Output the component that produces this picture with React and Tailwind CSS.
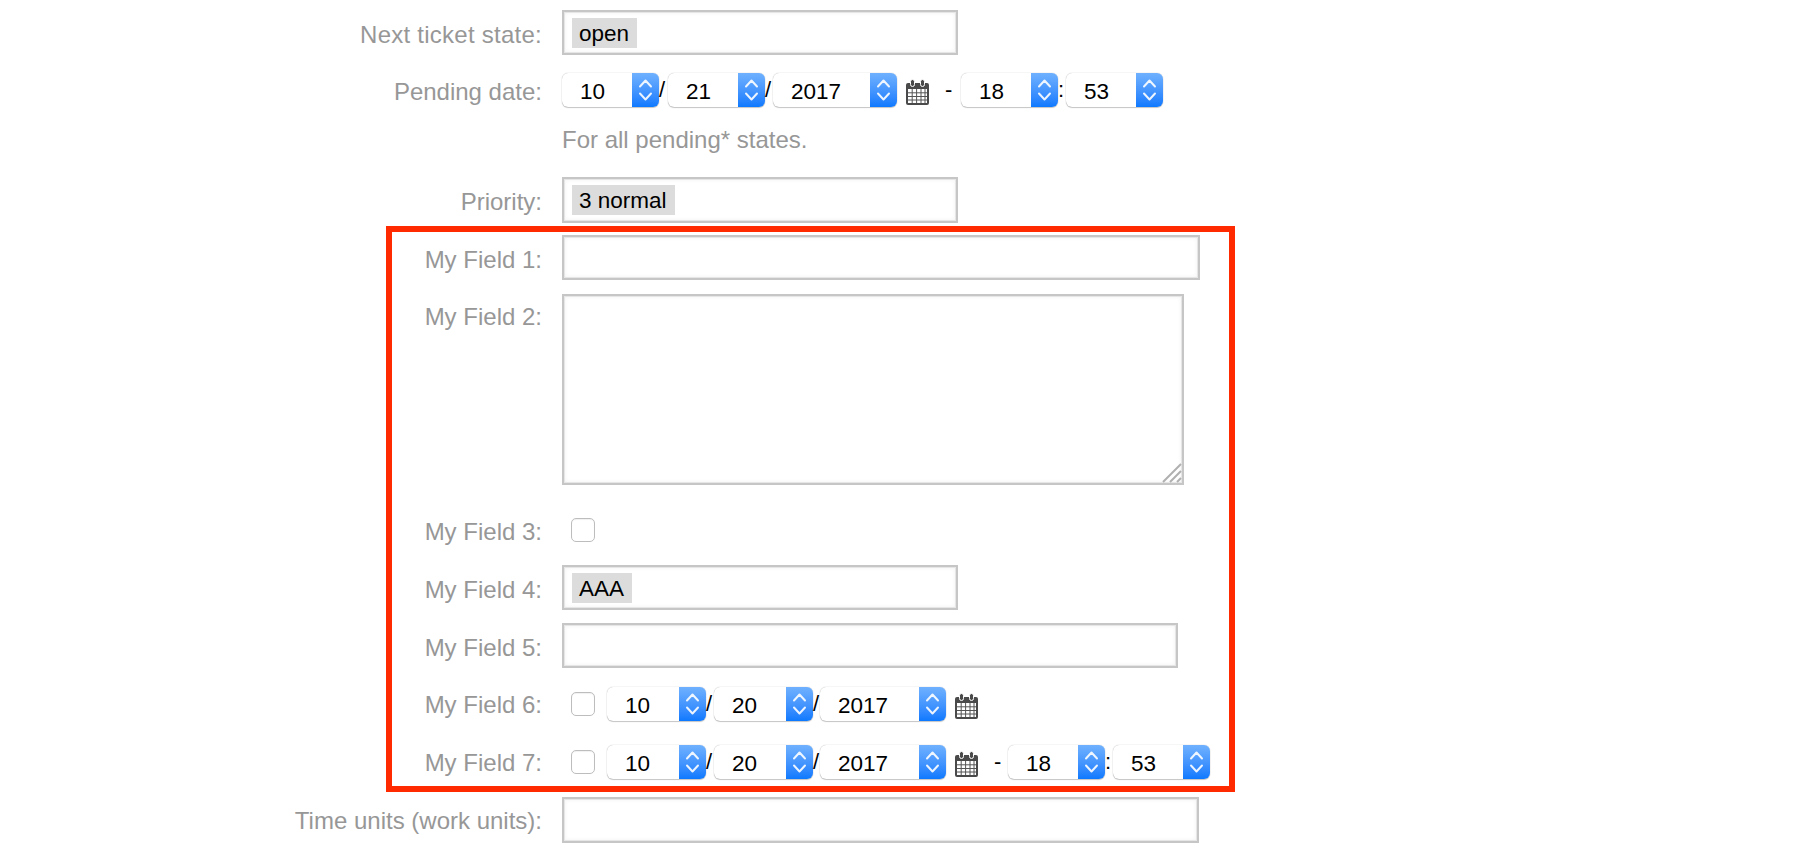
const fieldBox = "border-2 border-[#c6c6c6] bg-white shadow-[inset_0_0_0_1px_#e6e6e6,inset_0_0_5px_rgba(0,0,0,0.08)]";

const Label = ({ children, className }) => (
  <div className={`shrink-0 text-right text-[24px] leading-[28px] text-[#979797] ${className}`}>{children}</div>
);

const TextBox = ({ className }) => <div className={`${fieldBox} ${className}`} />;

const TokenBox = ({ value, className }) => (
  <div className={`${fieldBox} flex items-center pl-[8px] ${className}`}>
    <span className="h-[30px] bg-[#dcdcdc] pl-[7px] pr-[8px] text-[22.5px] leading-[32px] text-black">{value}</span>
  </div>
);

const Spinner = () => (
  <div className="flex h-full w-[27px] shrink-0 items-center justify-center rounded-r-[6px] bg-gradient-to-b from-[#6fb1ff] to-[#0a79ff]">
    <svg width="15" height="24" viewBox="0 0 15 24" fill="none" stroke="#ffffff" strokeOpacity="0.9" strokeWidth="2" strokeLinecap="round" strokeLinejoin="round">
      <path d="M2 8.5 7.5 2.5 13 8.5" />
      <path d="M2 15.5 7.5 21.5 13 15.5" />
    </svg>
  </div>
);

const Select = ({ value, className }) => (
  <div className={`flex h-[34px] shrink-0 items-stretch rounded-[6px] bg-white shadow-[0_0_1px_rgba(0,0,0,0.35),0_1px_1px_rgba(0,0,0,0.2)] ${className}`}>
    <span className="flex-1 pl-[18px] text-[22.5px] leading-[37px] text-black">{value}</span>
    <Spinner />
  </div>
);

const Sep = ({ children, className }) => (
  <span className={`shrink-0 text-[22px] leading-[34px] text-black ${className}`}>{children}</span>
);

const Calendar = () => (
  <svg className="ml-[9px] mt-[6px] shrink-0" width="23" height="26" viewBox="0 0 23 26">
    <path d="M2 4h19a2 2 0 0 1 2 2v18a2 2 0 0 1-2 2H2a2 2 0 0 1-2-2V6a2 2 0 0 1 2-2Z" fill="#4a4a4a" />
    <rect x="4.5" y="0.5" width="4" height="7" rx="2" fill="#4a4a4a" stroke="#ffffff" strokeWidth="1" />
    <rect x="14.5" y="0.5" width="4" height="7" rx="2" fill="#4a4a4a" stroke="#ffffff" strokeWidth="1" />
    <path d="M2 10h19v14H2Z" fill="#ffffff" />
    <path d="M6.2 10v14M10.6 10v14M15 10v14M19 10v14M2 13.8h19M2 17.5h19M2 21h19" stroke="#555555" strokeWidth="1" />
  </svg>
);

const DateParts = ({ day, small }) => {
  const mid = small ? "w-[97px]" : "w-[99px]";
  const year = small ? "w-[124px]" : "w-[126px]";
  return (
    <>
      <Select value="10" className={mid} />
      <Sep className={small ? "w-[9px]" : "w-[8px]"}>/</Sep>
      <Select value={day} className={mid} />
      <Sep className={small ? "w-[8px]" : "w-[7px]"}>/</Sep>
      <Select value="2017" className={year} />
      <Calendar />
    </>
  );
};

const TimeParts = ({ left }) => (
  <>
    <Sep className={left}>-</Sep>
    <Select value="18" className="w-[97px]" />
    <Sep className="w-[8px]">:</Sep>
    <Select value="53" className="w-[97px]" />
  </>
);

const CheckBox = () => (
  <div className="ml-[9px] mr-[12px] mt-[5px] h-[24px] w-[24px] shrink-0 rounded-[5px] border border-[#bdbdbd] bg-white shadow-[inset_0_1px_1px_rgba(0,0,0,0.06)]" />
);

// rows outside the red frame: label column ends at 542
const OuterRow = ({ label, labelClass = "pt-[11px]", className, children }) => (
  <div className={`flex items-start ${className}`}>
    <Label className={`w-[542px] ${labelClass}`}>{label}</Label>
    <div className="ml-[20px] flex items-start">{children}</div>
  </div>
);

// rows inside the frame: frame's inner edge is at 392
const FrameRow = ({ label, labelClass = "pt-[11px]", className, children }) => (
  <div className={`flex items-start ${className}`}>
    <Label className={`w-[150px] ${labelClass}`}>{label}</Label>
    <div className="ml-[20px] flex items-start">{children}</div>
  </div>
);

export default function App() {
  return (
    <div className="h-[855px] w-[1806px] overflow-hidden bg-white pt-[10px] font-['Liberation_Sans',Arial,sans-serif]">
      <OuterRow label="Next ticket state:" labelClass="pt-[11px] tracking-[0.25px]">
        <TokenBox value="open" className="h-[45px] w-[396px]" />
      </OuterRow>

      <OuterRow label="Pending date:" labelClass="pt-[5px]" className="mt-[18px]">
        <DateParts day="21" small />
        <TimeParts left="ml-[16px] w-[16px]" />
      </OuterRow>

      <div className="ml-[562px] mt-[19px] text-[24px] leading-[28px] text-[#979797]">For all pending* states.</div>

      <OuterRow label="Priority:" className="mt-[23px]">
        <TokenBox value="3 normal" className="h-[46px] w-[396px]" />
      </OuterRow>

      <div className="ml-[386px] mt-[3px] h-[566px] w-[849px] border-[6px] border-[#ff2a00] pt-[3px]">
        <FrameRow label="My Field 1:">
          <TextBox className="h-[45px] w-[638px]" />
        </FrameRow>
        <FrameRow label="My Field 2:" labelClass="pt-[9px]" className="mt-[14px]">
          <div className={`${fieldBox} relative h-[191px] w-[622px]`}>
            <svg className="absolute bottom-0 right-0" width="20" height="20" viewBox="0 0 20 20" stroke="#b0b0b0" strokeWidth="2">
              <path d="M1 19 19 1M8 19 19 8M15 19l4-4" />
            </svg>
          </div>
        </FrameRow>
        <FrameRow label="My Field 3:" labelClass="pt-[5px]" className="mt-[28px]">
          <CheckBox />
        </FrameRow>
        <FrameRow label="My Field 4:" className="mt-[19px]">
          <TokenBox value="AAA" className="h-[45px] w-[396px]" />
        </FrameRow>
        <FrameRow label="My Field 5:" className="mt-[13px]">
          <TextBox className="h-[45px] w-[616px]" />
        </FrameRow>
        <FrameRow label="My Field 6:" labelClass="pt-[4px]" className="mt-[19px]">
          <CheckBox />
          <DateParts day="20" />
        </FrameRow>
        <FrameRow label="My Field 7:" labelClass="pt-[4px]" className="mt-[24px]">
          <CheckBox />
          <DateParts day="20" />
          <TimeParts left="ml-[16px] w-[14px]" />
        </FrameRow>
      </div>

      <OuterRow label="Time units (work units):" labelClass="pt-[10px]" className="mt-[5px]">
        <TextBox className="h-[46px] w-[637px]" />
      </OuterRow>
    </div>
  );
}
